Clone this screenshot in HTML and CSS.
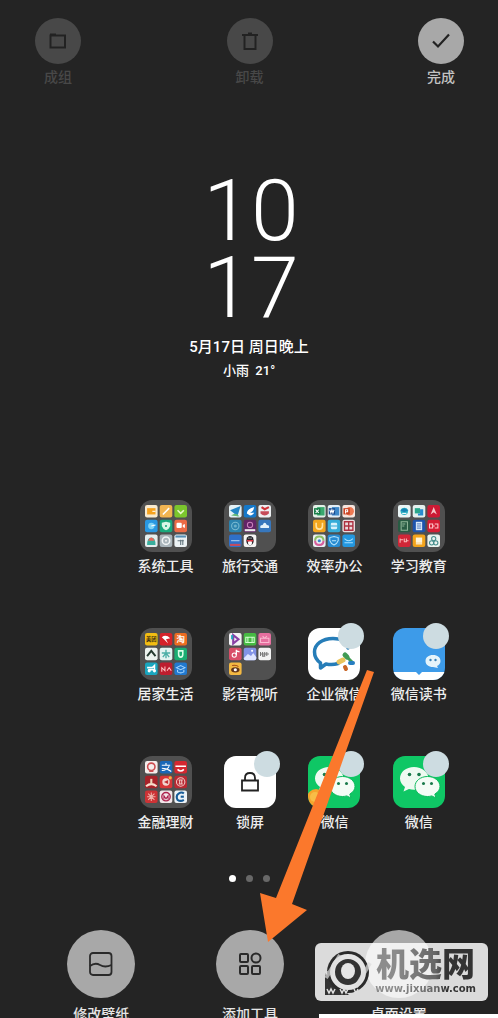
FILE: index.html
```
<!DOCTYPE html>
<html lang="zh-CN">
  <head>
    <meta charset="UTF-8" />
    <meta name="viewport" content="width=device-width, initial-scale=1.0" />
    <title>桌面编辑</title>
    <link rel="stylesheet" href="styles.css">
  </head>
  <body>
    <!-- shared shapes -->
    <svg class="defs" width="0" height="0" aria-hidden="true">
      <symbol id="wechat" viewBox="0 0 52 52">
        <rect width="52" height="52" fill="#0fc765" />
        <path d="M21 11C13 11 7 16 7 22.500c0 3.500 2 6.500 5 8.500l-1.500 4.500 5.500-2.500c1.600.5 3.300.7 5 .7 8 0 14.500-5 14.500-11.200S29 11 21 11z" fill="#eefaf1" />
        <path d="M34.500 20.500c-7 0-12.500 4.400-12.500 10s5.500 10 12.500 10c1.500 0 3-.2 4.300-.6l4.200 2.100-1.200-3.900c3.200-1.800 5.200-4.600 5.200-7.600 0-5.600-5.500-10-12.500-10z" fill="#f4fcf6" stroke="#0fb95e" stroke-width="1" />
        <g fill="#197a4b">
          <circle cx="16.500" cy="18.500" r="1.800" /><circle cx="26" cy="18.500" r="1.800" />
          <circle cx="30.500" cy="27.500" r="1.500" /><circle cx="38.500" cy="27.500" r="1.500" />
        </g>
      </symbol>
      <rect id="tile" width="12" height="12" rx="2" />
    </svg>

    <header class="top-bar">
      <button class="tool disabled" disabled>
        <span class="round">
          <svg width="20" height="20" viewBox="0 0 20 20" fill="none" stroke="#222" stroke-width="2"><path d="M2.500 16.500V4.500H17v12z" /><path d="M2 3.500h6" /></svg>
        </span>
        <span class="label">成组</span>
      </button>
      <button class="tool disabled" disabled>
        <span class="round">
          <svg width="20" height="20" viewBox="0 0 20 20" fill="none" stroke="#222" stroke-width="2"><path d="M4.500 4v14h11V4M2 4h16M8 2.500h4" /></svg>
        </span>
        <span class="label">卸载</span>
      </button>
      <button class="tool">
        <span class="round">
          <svg width="20" height="20" viewBox="0 0 20 20" fill="none" stroke="#222" stroke-width="2.200"><path d="M2 10.500l5 5L18 3.500" /></svg>
        </span>
        <span class="label">完成</span>
      </button>
    </header>

    <main>
      <section class="clock">
        <p class="time">10<br>17</p>
        <p class="date">5月17日 周日晚上</p>
        <p class="weather">小雨&nbsp; 21°</p>
      </section>

      <section class="apps">
        <button class="app first">
          <span class="icon folder">
            <svg viewBox="0 0 40 40">
              <use href="#tile" fill="#f8ead0" /><rect x="2" y="3" width="8" height="6" fill="#f6a21e" /><path d="M7 6h3" stroke="#fff" />
              <use href="#tile" x="14" fill="#f2b552" /><path d="M17 9l6-6" stroke="#fff" stroke-width="1.500" />
              <use href="#tile" x="28" fill="#7bc62d" /><path d="M31 5l3 3 3-3" stroke="#e7f8c9" stroke-width="1.500" fill="none" />
              <use href="#tile" y="14" fill="#2998e2" /><circle cx="6" cy="20" r="3" fill="#7fd3f5" /><path d="M6 20l4-1" stroke="#fff" />
              <use href="#tile" x="14" y="14" fill="#1aa97c" /><path d="M20 16l4 1v3q-1 3-4 4-3-1-4-4v-3z" fill="#d9f8e6" /><circle cx="20" cy="20" r="1" fill="#1aa97c" />
              <use href="#tile" x="28" y="14" fill="#ec6b46" /><rect x="30" y="17" width="5" height="5" rx="1" fill="#fff" /><path d="M36 19l2-1v4l-2-1z" fill="#fff" />
              <use href="#tile" y="28" fill="#e6eeee" /><path d="M2 38q0-7 4-7t4 7z" fill="#3aae9d" /><path d="M3 34q1-3 3-3t3 3z" fill="#e8685b" />
              <use href="#tile" x="14" y="28" fill="#a9b4ba" /><circle cx="20" cy="34" r="3.500" fill="none" stroke="#f1f4f5" stroke-width="1.500" /><circle cx="20" cy="34" r="1" fill="#eee" />
              <use href="#tile" x="28" y="28" fill="#edf3f5" /><path d="M29 30h10" stroke="#558fb5" stroke-width="2" /><path d="M31 34h6M34 33v5M36 33v5" stroke="#61737c" />
            </svg>
          </span>
          <span class="label">系统工具</span>
        </button>
        <button class="app">
          <span class="icon folder">
            <svg viewBox="0 0 40 40">
              <use href="#tile" fill="#e4f1f5" /><path d="M1 5l10-4-3 10-3-3z" fill="#2385c4" /><path d="M2 10q5-4 8 1" fill="#65b978" />
              <use href="#tile" x="14" fill="#1678c8" /><path d="M17 8q0-4 7-6-1 5-4 5 3 1 4 0-1 3-4 3z" fill="#fff" />
              <use href="#tile" x="28" fill="#edeff1" /><path d="M31 2l3 2 4-2" stroke="#d03338" stroke-width="2" fill="none" /><path d="M30 8q4 4 8 0v-2h-8z" fill="#c64b58" />
              <use href="#tile" y="14" fill="#2c83ae" /><circle cx="6" cy="20" r="3.500" fill="none" stroke="#7bbbd2" /><circle cx="6" cy="20" r="1.500" fill="#6bb0ca" />
              <use href="#tile" x="14" y="14" fill="#612466" /><circle cx="20" cy="19" r="2.500" fill="none" stroke="#c97fbd" /><path d="M15 24h10" stroke="#eee" stroke-width="2" />
              <use href="#tile" x="28" y="14" fill="#3777bd" /><path d="M30 22q-1-3 2-3 2-4 4 0 3 0 2 3z" fill="#e5f2fa" />
              <use href="#tile" y="28" fill="#2f70c9" /><path d="M2 34h8" stroke="#b3d0ef" /><path d="M1 38h10" stroke="#c64b5d" stroke-width="2" />
              <use href="#tile" x="14" y="28" fill="#f5f4f3" /><ellipse cx="20" cy="34" rx="3.500" ry="4.500" fill="#202126" /><ellipse cx="20" cy="36" rx="2" ry="2.500" fill="#fff" /><path d="M17 34h6" stroke="#df3541" stroke-width="1.500" /><circle cx="19" cy="31.500" r=".6" fill="#fff" /><circle cx="21" cy="31.500" r=".6" fill="#fff" />
            </svg>
          </span>
          <span class="label">旅行交通</span>
        </button>
        <button class="app">
          <span class="icon folder">
            <svg viewBox="0 0 40 40">
              <use href="#tile" fill="#e3f0e7" /><rect x="4" y="2" width="7" height="8" fill="#39a86e" /><rect x="1" y="3" width="6" height="6" fill="#137a43" /><path d="M2.500 4.500l3 3m0-3l-3 3" stroke="#fff" />
              <use href="#tile" x="14" fill="#e4edf5" /><rect x="18" y="2" width="7" height="8" fill="#3e88c9" /><rect x="15" y="3" width="6" height="6" fill="#194b91" /><path d="M16 4.500l1 3 1-3 1 3 1-3" stroke="#fff" fill="none" />
              <use href="#tile" x="28" fill="#f6e5de" /><circle cx="35" cy="6" r="4" fill="#ee7953" /><rect x="29" y="3" width="6" height="6" fill="#c94222" /><path d="M31 8V4.500h2v2h-2" stroke="#fff" fill="none" />
              <use href="#tile" y="14" fill="#f2a51e" /><path d="M3 17v3q0 3 3 3t3-3v-3" stroke="#ffe3a1" stroke-width="1.500" fill="none" />
              <use href="#tile" x="14" y="14" fill="#36acd8" /><rect x="17" y="17" width="6" height="6" rx="1" fill="#d7f1fb" /><path d="M17 20h6" stroke="#36acd8" />
              <use href="#tile" x="28" y="14" fill="#eadbdd" /><path d="M30 16h8v8h-8zM30 20h8M34 16v8" stroke="#ae3040" stroke-width="1.300" fill="none" />
              <use href="#tile" y="28" fill="#e9eff3" /><path d="M2 34q0-4 4-4t4 4" stroke="#8cbf66" stroke-width="2" fill="none" /><path d="M2 34q0 4 4 4t4-4" stroke="#d65e9c" stroke-width="2" fill="none" /><circle cx="6" cy="34" r="1.500" fill="#3b86cd" />
              <use href="#tile" x="14" y="28" fill="#278bd2" /><path d="M20 30l4 1v3q-1 3-4 4-3-1-4-4v-3zM18 34h4" stroke="#b9e5fc" fill="none" />
              <use href="#tile" x="28" y="28" fill="#2497df" /><path d="M30 32q4 4 8 0M30 36h8" stroke="#a8e0ff" fill="none" />
            </svg>
          </span>
          <span class="label">效率办公</span>
        </button>
        <button class="app">
          <span class="icon folder">
            <svg viewBox="0 0 40 40">
              <use href="#tile" fill="#eaf5f6" /><circle cx="6" cy="6" r="3.500" fill="#2bafc3" /><path d="M2 5l4-2 4 2-4 2z" fill="#1682b4" /><path d="M4 8h4" stroke="#fff" />
              <use href="#tile" x="14" fill="#e4f0ee" /><path d="M16 3h5v5h-5z" fill="#29a68b" /><path d="M21 4h3v6h-5V8h2z" fill="#278bce" />
              <use href="#tile" x="28" fill="#cc1934" /><path d="M31 9l3-7 3 7-3-2z" fill="#f5c5c8" />
              <use href="#tile" y="14" fill="#285c43" /><path d="M3 16h6v8H3zM4 18h3M4 20h2" stroke="#8eb698" fill="none" />
              <use href="#tile" x="14" y="14" fill="#1d54ad" /><rect x="17" y="16" width="6" height="8" fill="#dbe9f8" /><path d="M18 18h4M18 20h4M18 22h4" stroke="#1d54ad" stroke-width=".7" />
              <use href="#tile" x="28" y="14" fill="#d51d34" /><path d="M30 18h3v4h-3zM35 18h3v4h-3M33 20h2" stroke="#ffc8cd" fill="none" />
              <use href="#tile" y="28" fill="#d12637" /><path d="M2 32v4M2 33h3M6 32v3h2v-3M8 34h2" stroke="#fbb8b8" fill="none" />
              <use href="#tile" x="14" y="28" fill="#f3a41c" /><rect x="17" y="31" width="6" height="5" fill="#fff4d7" /><path d="M17 37h6" stroke="#fff" />
              <use href="#tile" x="28" y="28" fill="#eaf3ef" /><g fill="none" stroke="#458d8c"><circle cx="34" cy="32" r="2" /><circle cx="32" cy="36" r="2" /><circle cx="36" cy="36" r="2" /></g>
            </svg>
          </span>
          <span class="label">学习教育</span>
        </button>

        <button class="app first">
          <span class="icon folder">
            <svg viewBox="0 0 40 40">
              <use href="#tile" fill="#f2bd12" /><text x="1" y="8" font-size="5" font-weight="700" fill="#3c2e10">美团</text>
              <use href="#tile" x="14" fill="#d5222a" /><path d="M16 4q4-3 8 1l-4 1 2 4-3-3z" fill="#fff" />
              <use href="#tile" x="28" fill="#ed6c21" /><text x="30" y="9" font-size="8" font-weight="700" fill="#fff">淘</text>
              <use href="#tile" y="14" fill="#edf2ee" /><path d="M2 22l4-5 4 5" stroke="#26392f" stroke-width="1.800" fill="none" />
              <use href="#tile" x="14" y="14" fill="#e4f3f1" /><path d="M20 16v8M16 19h8M17 23l3-4 3 4" stroke="#4cafa7" stroke-width="1.300" fill="none" />
              <use href="#tile" x="28" y="14" fill="#1bad72" /><path d="M32 17h4v3q0 3-2 3t-2-3z" stroke="#d9ffe7" stroke-width="1.500" fill="none" />
              <use href="#tile" y="28" fill="#19a6bf" /><circle cx="4" cy="36" r="1.500" fill="#fff" /><circle cx="9" cy="36" r="1.500" fill="#fff" /><path d="M2 33h5l2-2v4H3" stroke="#fff" stroke-width="1.500" fill="none" />
              <use href="#tile" x="14" y="28" fill="#be1d2e" /><path d="M16 37v-4l3 3v-4M21 36l2-3 2 3" stroke="#ffc1c1" fill="none" />
              <use href="#tile" x="28" y="28" fill="#2179d0" /><path d="M30 33l4-2 4 2-4 2zM31 35v2q3 2 6 0v-2" stroke="#a3d5ff" fill="none" />
            </svg>
          </span>
          <span class="label">居家生活</span>
        </button>
        <button class="app">
          <span class="icon folder">
            <svg viewBox="0 0 40 40">
              <use href="#tile" fill="#f3f2f6" /><path d="M4 2l5 4-5 4z" fill="none" stroke="#8940a5" stroke-width="2" /><path d="M3 2v4" stroke="#20a7bc" stroke-width="2" />
              <use href="#tile" x="14" fill="#46ba43" /><path d="M16 4h8v5h-8zM18 4v5M22 4v5" stroke="#d2ffd0" fill="none" />
              <use href="#tile" x="28" fill="#e66f9f" /><path d="M30 5h8v4h-8zM32 3l2 2 2-2" stroke="#f9b9d0" fill="none" />
              <use href="#tile" y="14" fill="#d94e68" /><path d="M7 16v5M7 17l3 1" stroke="#fff" stroke-width="1.300" /><circle cx="5" cy="21" r="2" fill="none" stroke="#fff" />
              <use href="#tile" x="14" y="14" fill="#8393e6" /><path d="M14 24l4-4 3 2 2-3 3 4v1q0 2-2 2h-8q-2 0-2-2z" fill="#dfe5ff" /><circle cx="22" cy="17" r="1" fill="#fff" />
              <use href="#tile" x="28" y="14" fill="#f3f3f3" /><path d="M30 18v4M32 18v4h2v-4M36 18v4M30 20h8" stroke="#777" fill="none" />
              <use href="#tile" y="28" fill="#f4b942" /><ellipse cx="6" cy="35" rx="4" ry="2.500" fill="#61351b" /><circle cx="6" cy="35" r="1.500" fill="#fff" /><path d="M3 31q4-1 6 1" stroke="#a34a1a" fill="none" />
            </svg>
          </span>
          <span class="label">影音视听</span>
        </button>
        <button class="app">
          <span class="icon">
            <svg viewBox="0 0 52 52">
              <rect width="52" height="52" fill="#fff" />
              <path d="M40 20C39 14 33 10.500 25 10.500 14 10.500 6.500 16.500 6.500 24c0 5 2.500 8.500 6 11v5l5.500-4c5 1 8 .8 12-.5" fill="none" stroke="#267db8" stroke-width="3.500" stroke-linecap="round" stroke-linejoin="round" />
              <path d="M37 27l2 2" stroke="#419b54" stroke-width="5" stroke-linecap="round" />
              <path d="M39 29l5 5" stroke="#419b54" stroke-width="3" stroke-linecap="round" />
              <path d="M42 35l3 0" stroke="#277ec0" stroke-width="4" stroke-linecap="round" />
              <path d="M37 39l1 2" stroke="#c96526" stroke-width="4" stroke-linecap="round" />
              <path d="M31 34l4-2" stroke="#e9c45b" stroke-width="5" stroke-linecap="round" />
            </svg>
            <i class="badge"></i>
          </span>
          <span class="label">企业微信</span>
        </button>
        <button class="app">
          <span class="icon">
            <svg viewBox="0 0 52 52">
              <rect width="52" height="52" fill="#3d9be9" />
              <path d="M0 44h23l3 3 3-3h23v8H0z" fill="#fff" />
              <path d="M40 27c-4.500 0-7.500 2.500-7.500 6s3 6 7.500 6l5 1-1-2c2-1 3.500-2.500 3.500-5 0-3.500-3-6-7.500-6z" fill="#e5f4fb" />
              <circle cx="37.500" cy="32" r="1.200" fill="#3a82b8" /><circle cx="42.500" cy="32" r="1.200" fill="#3a82b8" />
            </svg>
            <i class="badge"></i>
          </span>
          <span class="label">微信读书</span>
        </button>

        <button class="app first">
          <span class="icon folder">
            <svg viewBox="0 0 40 40">
              <use href="#tile" fill="#f5edec" /><circle cx="6" cy="5.500" r="3.500" fill="none" stroke="#cd4d51" stroke-width="1.500" /><path d="M4 10h4" stroke="#cd4d51" />
              <use href="#tile" x="14" fill="#1967b7" /><path d="M16 4h8M20 2v2M23 5q-2 4-7 4M16 7q5 0 9 3" stroke="#fff" fill="none" />
              <use href="#tile" x="28" fill="#d52730" /><path d="M29 5h10M31 8q3 3 6 0" stroke="#fff" stroke-width="1.500" fill="none" />
              <use href="#tile" y="14" fill="#a72229" /><path d="M1 24q5-4 10 0" stroke="#f8dfcf" stroke-width="2" fill="none" /><path d="M6 17v5" stroke="#eed6bb" stroke-width="2" />
              <use href="#tile" x="14" y="14" fill="#d83638" /><circle cx="20" cy="20" r="3.500" fill="#f2d7d2" /><path d="M18 20l4-2v4z" fill="#c22e32" /><circle cx="24" cy="16" r="1.500" fill="#f3b640" />
              <use href="#tile" x="28" y="14" fill="#b82832" /><circle cx="34" cy="20" r="4" fill="none" stroke="#f4cbc8" /><path d="M32 18h4M32 22h4M33 18v4M35 18v4" stroke="#f4cbc8" />
              <use href="#tile" y="28" fill="#cd3235" /><path d="M6 30v8M2 34h8M3 31l6 6M9 31l-6 6" stroke="#f1b2a9" />
              <use href="#tile" x="14" y="28" fill="#f1e6e9" /><circle cx="20" cy="34" r="4" fill="none" stroke="#ad214d" stroke-width="1.300" /><path d="M18 37v-4l2 3 2-3v4" stroke="#ad214d" fill="none" />
              <use href="#tile" x="28" y="28" fill="#edf3f7" /><path d="M37 31q-2-2-5 0t-1 6q3 2 6 0" stroke="#175c98" stroke-width="2" fill="none" /><path d="M34 34h3" stroke="#175c98" stroke-width="2" />
            </svg>
          </span>
          <span class="label">金融理财</span>
        </button>
        <button class="app">
          <span class="icon">
            <svg viewBox="0 0 52 52">
              <rect width="52" height="52" fill="#fff" />
              <path d="M18 24.500h16v10H18zM21 24v-2q0-5 5-5t5 5v2" fill="none" stroke="#222" stroke-width="1.800" />
            </svg>
            <i class="badge"></i>
          </span>
          <span class="label">锁屏</span>
        </button>
        <button class="app">
          <span class="icon">
            <svg viewBox="0 0 52 52"><use href="#wechat" width="52" height="52" /><circle cx="8" cy="42" r="9" fill="#f5a52d" /><circle cx="7" cy="41" r="5" fill="#f8bd47" /></svg>
            <i class="badge"></i>
          </span>
          <span class="label">微信</span>
        </button>
        <button class="app">
          <span class="icon">
            <svg viewBox="0 0 52 52"><use href="#wechat" width="52" height="52" /></svg>
            <i class="badge"></i>
          </span>
          <span class="label">微信</span>
        </button>
      </section>

      <div class="dots"><i class="dot active"></i><i class="dot"></i><i class="dot"></i></div>
    </main>

    <footer class="bottom-bar">
      <button class="tool big">
        <span class="round">
          <svg width="26" height="26" viewBox="0 0 26 26" fill="none" stroke="#2a2a2a" stroke-width="1.800"><rect x="2" y="2" width="21.500" height="22" rx="3" /><path d="M2 15q5-4 10-1t11.500 0" /></svg>
        </span>
        <span class="label">修改壁纸</span>
      </button>
      <button class="tool big">
        <span class="round">
          <svg width="26" height="26" viewBox="0 0 26 26" fill="none" stroke="#2a2a2a" stroke-width="2"><rect x="3" y="3" width="8" height="8" rx="1" /><circle cx="19" cy="7" r="4.500" /><rect x="3" y="15" width="8" height="8" rx="1" /><rect x="15" y="15" width="8" height="8" rx="1" /></svg>
        </span>
        <span class="label">添加工具</span>
      </button>
      <button class="tool big">
        <span class="round"></span>
        <span class="label">桌面设置</span>
      </button>
    </footer>

    <svg class="arrow" width="116" height="274" viewBox="0 0 116 274" aria-hidden="true">
      <path d="M107 0l7 2-82 232 15 6-39 32-8-49 16 5z" fill="#fb782c" />
    </svg>

    <div class="watermark">
      <svg width="48" height="50" viewBox="0 0 48 50" aria-hidden="true">
        <path d="M1 26v22h24z" fill="#333" />
        <circle cx="24" cy="25" r="21" fill="#2b2b2b" />
        <circle cx="24" cy="25" r="15.500" fill="#333" stroke="#e4e4e4" stroke-width="5" />
        <ellipse cx="24" cy="24" rx="7" ry="8" fill="#e5e5e5" />
        <path d="M0 26h9M2 31L16 8M32 40l14-24" stroke="#ddd" stroke-width="4" opacity=".7" />
        <path d="M3 42l2 4 2-4 2 4 2-4M16 42l2 4 2-4 2 4 2-4M30 42l2 4 2-4" fill="none" stroke="#ddd" stroke-width="1.500" />
      </svg>
      <div class="site">
        <b>机选网</b>
        <a href="#">www.jixuanw.com</a>
      </div>
    </div>
    <div class="strip"></div>
  </body>
</html>
```
FILE: styles.css
```
* {
  margin: 0;
  padding: 0;
  box-sizing: border-box;
}

body {
  position: relative;
  height: 100vh;
  overflow: hidden;
  background: #242424;
  color: #fff;
  font-family: Roboto, "Noto Sans CJK SC", sans-serif;
}

button {
  border: none;
  background: none;
  color: inherit;
  font: inherit;
  cursor: pointer;
}

.defs {
  position: absolute;
}

.label {
  font-size: 14px;
  font-weight: 500;
  line-height: 20px;
  white-space: nowrap;
}

/* top and bottom tools */
.top-bar {
  display: flex;
  justify-content: space-between;
  padding: 18px 34px 0 35px;
}

.tool {
  width: 46px;
  display: flex;
  flex-direction: column;
  align-items: center;
  gap: 3px;
  color: #c4c4c4;
}

.round {
  width: 46px;
  height: 46px;
  border-radius: 50%;
  background: #a8a8a8;
  display: flex;
  align-items: center;
  justify-content: center;
}

.disabled {
  color: #484848;
}

.disabled .round {
  background: #484848;
}

.bottom-bar {
  display: grid;
  grid-template-columns: repeat(3, 1fr);
  justify-items: center;
  padding: 0 25px 0 27px;
  margin-top: 48px;
}

.big {
  width: 68px;
  gap: 6px;
  color: #e6e6e6;
}

.big .round {
  width: 68px;
  height: 68px;
}

/* clock */
.clock {
  margin-top: 85px;
  text-align: center;
}

.time {
  padding-left: 4px;
  font-size: 86px;
  font-weight: 300;
  line-height: 77px;
}

.date {
  margin-top: 9px;
  font-size: 15px;
  font-weight: 500;
  line-height: 24px;
}

.weather {
  font-size: 13px;
  font-weight: 500;
  line-height: 24px;
}

/* app grid */
.apps {
  display: grid;
  grid-template-columns: repeat(5, 1fr);
  row-gap: 52px;
  padding: 0 37px 0 39px;
  margin-top: 117px;
}

.app {
  display: flex;
  flex-direction: column;
  align-items: center;
  gap: 4px;
  color: #eee;
}

.first {
  grid-column-start: 2;
}

.icon {
  position: relative;
  width: 52px;
  height: 52px;
}

.icon svg {
  display: block;
  width: 100%;
  height: 100%;
  border-radius: 12px;
}

.folder {
  padding: 5px;
  border-radius: 12px;
  background: #505050;
}

.folder svg {
  border-radius: 0;
}

.badge {
  position: absolute;
  top: -5px;
  right: -4px;
  width: 26px;
  height: 26px;
  border-radius: 50%;
  background: #cddce1;
}

.dots {
  display: flex;
  justify-content: center;
  gap: 10px;
  margin-top: 43px;
}

.dot {
  width: 7px;
  height: 7px;
  border-radius: 50%;
  background: #686868;
}

.active {
  background: #fff;
}

/* overlays */
.arrow {
  position: absolute;
  left: 260px;
  top: 670px;
}

.watermark {
  position: absolute;
  right: 10px;
  bottom: 17px;
  display: flex;
  align-items: center;
  gap: 3px;
  padding: 4px 12px 4px 9px;
  height: 58px;
  border-radius: 6px;
  background: rgba(255, 255, 255, 0.84);
}

.site {
  display: flex;
  flex-direction: column;
  align-items: center;
  color: transparent;
  background: linear-gradient(to right, #8c8c8c 20%, #666 60%, #333 70%);
  -webkit-background-clip: text;
  background-clip: text;
}

.site b {
  font-size: 33px;
  font-weight: 900;
  line-height: 34px;
  white-space: nowrap;
}

.site a {
  color: inherit;
  font-family: "DejaVu Sans", sans-serif;
  font-size: 10px;
  font-weight: 700;
  line-height: 14px;
  text-decoration: none;
}

.strip {
  position: absolute;
  right: 0;
  bottom: 0;
  width: 36%;
  height: 4px;
  background: #fff;
}
```
